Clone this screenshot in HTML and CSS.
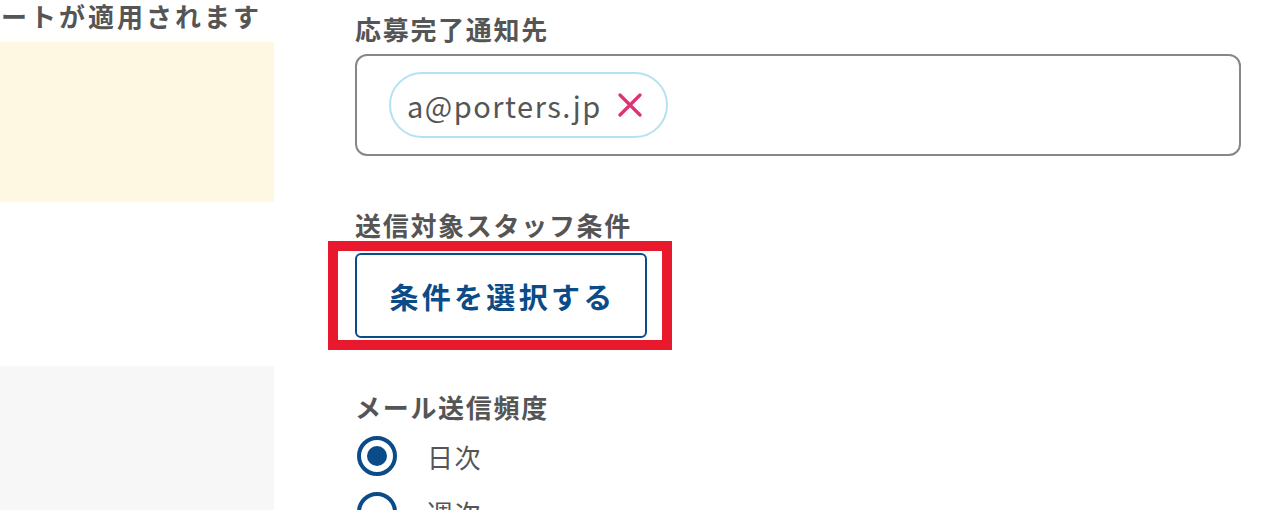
FILE: index.html
```html
<!DOCTYPE html>
<html lang="ja">
<head>
<meta charset="utf-8">
<link rel="stylesheet" href="styles.css">
</head>
<body>
<div class="page">
  <div class="left">
    <p class="note">レートが適用されます</p>
    <div class="yellow"></div>
    <div class="blank"></div>
    <div class="gray"></div>
  </div>
  <div class="right">
    <div class="label l1">応募完了通知先</div>
    <div class="tagbox">
      <span class="chip">a@porters.jp
        <svg class="x" width="24" height="24" viewBox="0 0 24 24"><path d="M2 2 L22 22 M22 2 L2 22" stroke="#e03173" stroke-width="3.2" stroke-linecap="round" fill="none"/></svg>
      </span>
    </div>
    <div class="label l2">送信対象スタッフ条件</div>
    <div class="btnwrap">
      <button class="btn">条件を選択する</button>
      <span class="highlight"></span>
    </div>
    <div class="label l3">メール送信頻度</div>
    <div class="radios">
      <label class="radio"><span class="circle on"></span><span class="rtext">日次</span></label>
      <label class="radio"><span class="circle"></span><span class="rtext">週次</span></label>
    </div>
  </div>
</div>
</body>
</html>
```
FILE: styles.css
```css
html, body { margin: 0; padding: 0; background: #fff; }
body { font-family: "Noto Sans CJK JP", "Noto Sans", sans-serif; color: #555; }
.page { display: flex; width: 1272px; height: 510px; overflow: hidden; }
.left { width: 274px; flex-shrink: 0; display: flex; flex-direction: column; }
.note { margin: 0 0 0 -28px; font-size: 26px; font-weight: 700; letter-spacing: 3px; line-height: 32px; white-space: nowrap; height: 42px; }
.yellow { height: 160px; background: #fef7e2; }
.blank { height: 164px; }
.gray { flex: 1; background: #f7f7f7; }
.right { margin-left: 81px; width: 886px; display: flex; flex-direction: column; }
.label { font-size: 26px; font-weight: 700; letter-spacing: 1.7px; line-height: 32px; white-space: nowrap; }
.l1 { margin-top: 13px; }
.tagbox { margin-top: 9px; border: 2px solid #878787; border-radius: 12px; padding: 16px 32px; box-sizing: border-box; height: 103px; }
.chip { display: inline-flex; align-items: center; gap: 16px; height: 66px; box-sizing: border-box; border: 2px solid #b5e1f4; border-radius: 33px; padding: 0 24px 0 16px; font-size: 29px; letter-spacing: 1.5px; color: #555; }
.x { display: block; }
.l2 { margin-top: 53px; }
.btnwrap { position: relative; margin-top: 12px; align-self: flex-start; }
.btn { display: block; width: 292px; height: 85px; background: #fff; border: 2px solid #0b4c88; border-radius: 6px; color: #0b4c88; font-family: inherit; font-size: 29px; font-weight: 700; letter-spacing: 3.3px; padding: 0 0 0 3px; }
.highlight { position: absolute; left: -27px; right: -25px; top: -12px; bottom: -12px; border: 10px solid #e8192c; pointer-events: none; }
.l3 { margin-top: 53px; }
.radios { margin-top: 13px; display: flex; flex-direction: column; gap: 16px; }
.radio { display: flex; align-items: center; height: 40px; }
.circle { width: 40px; height: 40px; box-sizing: border-box; border: 4px solid #0b4c88; border-radius: 50%; margin-left: 2px; position: relative; flex-shrink: 0; }
.circle.on::after { content: ""; position: absolute; left: 6px; top: 6px; width: 20px; height: 20px; border-radius: 50%; background: #0b4c88; }
.rtext { margin-left: 30px; font-size: 26px; letter-spacing: 1.5px; }
```
